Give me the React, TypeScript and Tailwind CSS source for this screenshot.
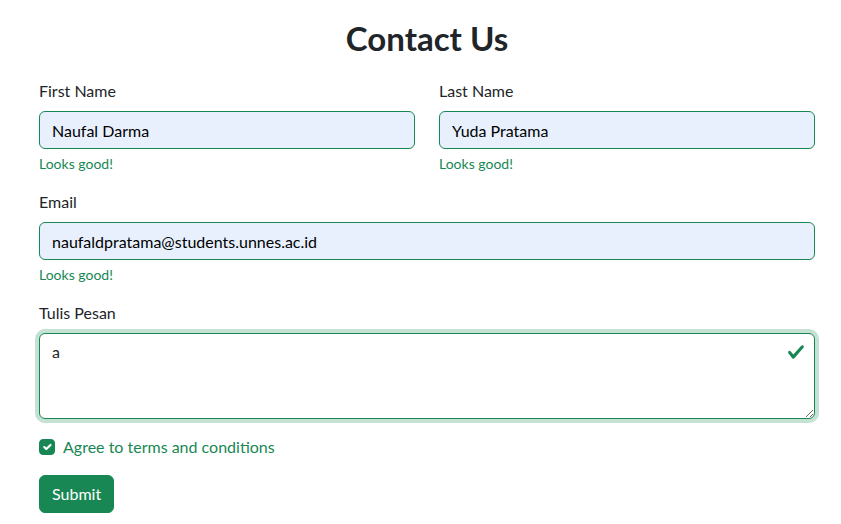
import React from "react";

function Field({ label, value, id }: { label: string; value: string; id: string }) {
  return (
    <div className="mb-4">
      <label htmlFor={id} className="block mb-2 text-base leading-6 text-[#212529]">
        {label}
      </label>
      <input
        id={id}
        defaultValue={value}
        className="block w-full h-[38px] px-3 py-1.5 text-base leading-6 text-[#000] bg-[#e8f0fe] border border-[#198754] rounded-[6px] outline-none"
      />
      <div className="mt-1 text-[14px] leading-[21px] text-[#198754]">Looks good!</div>
    </div>
  );
}

export default function App() {
  return (
    <div
      className="min-h-screen bg-white text-[#212529]"
      style={{ fontFamily: 'Lato, "Noto Sans", sans-serif' }}
    >
      <div className="pl-[39px] pr-[26px] pt-[19px]">
        <h2 className="text-[33px] font-bold leading-[38px] text-center text-[#212529] mb-[22px]">
          Contact Us
        </h2>
        <form onSubmit={(e) => e.preventDefault()}>
          <div className="grid grid-cols-2 gap-x-6">
            <Field id="fn" label="First Name" value="Naufal Darma" />
            <Field id="ln" label="Last Name" value="Yuda Pratama" />
          </div>
          <Field id="em" label="Email" value="naufaldpratama@students.unnes.ac.id" />
          <div className="mb-4">
            <label htmlFor="msg" className="block mb-2 text-base leading-6 text-[#212529]">
              Tulis Pesan
            </label>
            <div className="relative">
              <textarea
                id="msg"
                defaultValue="a"
                rows={3}
                className="block w-full h-[86px] pl-3 pr-9 py-1.5 text-base leading-6 text-[#212529] bg-white border border-[#198754] rounded-[6px] outline-none shadow-[0_0_0_4px_rgba(25,135,84,0.25)] resize-y"
              />
              <svg
                className="absolute top-[10px] right-[10px] w-[18px] h-[18px] pointer-events-none"
                viewBox="0 0 8 8"
              >
                <path
                  fill="#198754"
                  d="M2.3 6.73.6 4.53c-.4-1.04.46-1.4 1.1-.8l1.1 1.4 3.4-3.8c.6-.63 1.6-.27 1.2.7l-4 4.6c-.43.5-.8.4-1.1.1z"
                />
              </svg>
            </div>
          </div>
          <div className="mb-4 flex items-start">
            <span className="mt-1 w-4 h-4 shrink-0 rounded-[4px] bg-[#198754] border border-[#198754] flex items-center justify-center">
              <svg viewBox="0 0 20 20" className="w-4 h-4">
                <path
                  fill="none"
                  stroke="#fff"
                  strokeLinecap="round"
                  strokeLinejoin="round"
                  strokeWidth="3"
                  d="m6 10 3 3 6-6"
                />
              </svg>
            </span>
            <label className="ml-2 text-base leading-6 text-[#198754]">Agree to terms and conditions</label>
          </div>
          <button
            type="submit"
            className="h-[38px] px-3 py-1.5 text-base leading-6 text-white bg-[#198754] border border-[#198754] rounded-[6px]"
          >
            Submit
          </button>
        </form>
      </div>
    </div>
  );
}
